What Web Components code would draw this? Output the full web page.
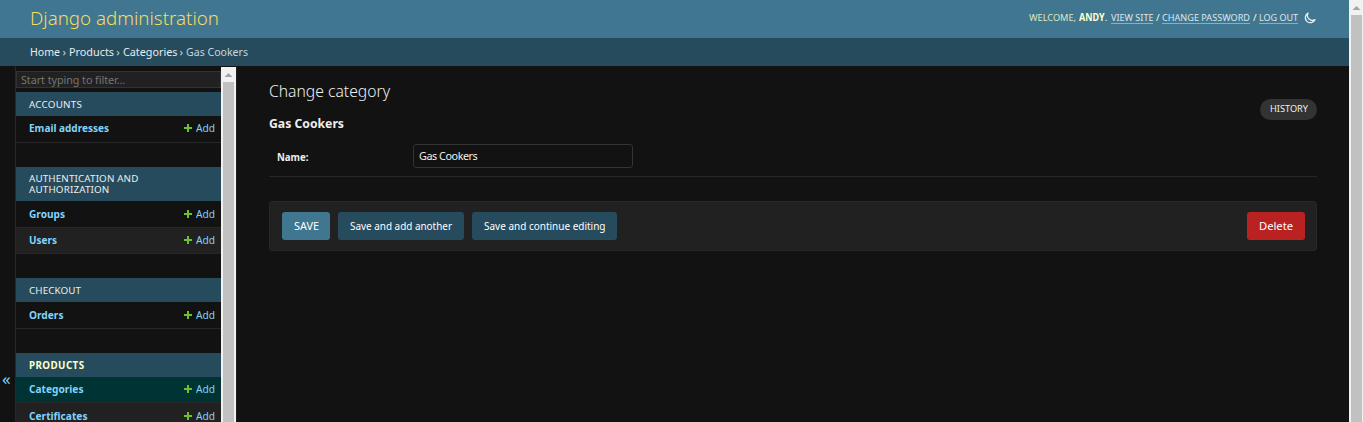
<!DOCTYPE html>
<html lang="en">
<head>
<meta charset="utf-8">
<title>Change category | Django administration</title>
<style>
html,body{margin:0;height:100%;overflow:hidden;background:#121212}
body{font-family:"Noto Sans","Open Sans",sans-serif;font-size:11px;color:#eee}
</style>
</head>
<body>
<admin-app></admin-app>
<script>
const define = (name, html, setup) => customElements.define(name, class extends HTMLElement {
  connectedCallback() {
    if (this.shadowRoot) return;
    this.attachShadow({mode: 'open'}).innerHTML = html;
    if (setup) setup.call(this, this.shadowRoot);
  }
});

/* Text run that fills a given width: condensed when too wide, tracked when too narrow. */
define('fit-text', `<style>
:host{display:inline-block;white-space:nowrap;line-height:16px;flex:none}
span{display:inline-block;transform-origin:0 50%}
</style><span><slot></slot></span>`, function (root) {
  const w = +this.getAttribute('w'), s = root.querySelector('span');
  const natural = s.getBoundingClientRect().width;
  if (natural > w) s.style.transform = `scaleX(${w / natural})`;
  else s.style.letterSpacing = (w - natural) / this.textContent.length + 'px';
  this.style.width = w + 'px';
});

define('scroll-bar', `<style>
:host{display:flex;flex-direction:column;align-items:center;box-sizing:border-box;background:#f1f1f1;flex:none}
svg{display:block;flex:none}
div{flex:1;align-self:stretch;background:#c1c1c1;margin:0 var(--edge,2px) 0 2px}
</style><svg width="15" height="15" viewBox="0 0 15 15"><path d="M3.5 10 7.5 6l4 4z" fill="#a3a3a3"/></svg><div></div>`);

define('admin-header', `<style>
:host{display:flex;justify-content:space-between;height:38px;background:#417690;padding:0 33px 0 30px;box-sizing:border-box;flex:none}
.brand{font:300 19px/36px "Noto Sans","Open Sans",sans-serif;color:#f5dd5d}
.brand fit-text{line-height:36px}
.tools{display:flex;align-items:center;font-size:9.8px;color:#ffc;height:35px}
.link{color:#dfe7eb;border-bottom:1px solid #90adbb;line-height:11px}
b{font-weight:700}
svg{margin:1px 0 0 6px}
.s{margin:0 3px 0 3px;width:3px}
</style>
<div class="brand"><fit-text w="189">Django administration</fit-text></div>
<div class="tools"><fit-text w="47" style="color:#dfe7c0">WELCOME,</fit-text><b style="margin-left:3px"><fit-text w="25.5">ANDY</fit-text></b><span>.</span><fit-text class="link" w="42.5" style="margin-left:3px">VIEW SITE</fit-text><span class="s">/</span><fit-text class="link" w="88">CHANGE PASSWORD</fit-text><span class="s">/</span><fit-text class="link" w="39">LOG OUT</fit-text>
<svg width="12" height="12" viewBox="0 0 12 12" fill="none" stroke="#e7edf0" stroke-width="1.3" stroke-linejoin="round"><path d="M4 1.1A5.1 5.1 0 1 0 11.1 7.6 5 5 0 0 1 4 1.1Z"/></svg></div>`);

define('bread-crumbs', `<style>
:host{display:flex;align-items:center;gap:2.4px;height:28px;background:#264b5d;padding-left:30px;font-size:11.5px;color:#e8edef;flex:none}
i{font-style:normal;width:4px;color:#c9d6db;line-height:16px}
.now{color:#c6d6dd}
</style><fit-text w="30">Home</fit-text><i>›</i><fit-text w="45">Products</fit-text><i>›</i><fit-text w="54.5">Categories</fit-text><i>›</i><fit-text class="now" w="62">Gas Cookers</fit-text>`);

define('nav-module', `<style>
:host{display:block;margin-bottom:24px}
header{background:#264b5d;height:24px;box-sizing:border-box;padding:7px 13px 0;font-size:9.8px;color:#eee;display:flex;flex-direction:column}
:host([tall]) header{height:34px;padding-top:6px}
header ::slotted(fit-text){line-height:11px}
:host([current]) header{font-weight:700;color:#ffc}
</style><header><slot name="title"></slot></header><slot></slot>`);

define('nav-row', `<style>
:host{display:flex;justify-content:space-between;align-items:flex-start;box-sizing:border-box;height:26px;border-bottom:1px solid #272727;padding:4px 6px 0 13px;color:#81d4fa;font-size:11.3px}
:host([first]){height:27px}
:host([low]){padding-top:5px}
:host([alt]){background:#212121}
:host([current]){background:#003333}
b{font-weight:700}
.add{display:flex;align-items:center}
svg{margin-right:4px}
</style><b><slot></slot></b><span class="add"><svg width="8" height="8" viewBox="0 0 8 8"><path d="M3 0h2v3h3v2H5v3H3V5H0V3h3z" fill="#70bf2b"/></svg><fit-text w="19">Add</fit-text></span>`);

define('nav-sidebar', `<style>
:host{display:flex;flex:none;width:237px;box-sizing:border-box;border-right:1px solid #202020;overflow:hidden}
.toggle{border-right:1px solid #272727;box-sizing:border-box;width:16px;color:#81d4fa;font-size:17px;padding:305px 0 0 2px;line-height:16px;flex:none}
.list{width:205px;flex:none;overflow:hidden;padding-top:5px}
input{display:block;box-sizing:border-box;width:205px;height:17px;border:1px solid #333;background:#212121;padding:0 4px;margin-bottom:4px;font:10.8px "Noto Sans",sans-serif;letter-spacing:-.07px}
input::placeholder{color:#757575}
scroll-bar{width:15px;margin-top:1px}
</style>
<div class="toggle">«</div>
<div class="list"><input placeholder="Start typing to filter…">
<nav-module><fit-text slot="title" w="53">ACCOUNTS</fit-text><nav-row first><fit-text w="80">Email addresses</fit-text></nav-row></nav-module>
<nav-module tall><fit-text slot="title" w="109.5">AUTHENTICATION AND</fit-text><fit-text slot="title" w="80.5">AUTHORIZATION</fit-text><nav-row first low><fit-text w="36">Groups</fit-text></nav-row><nav-row alt><fit-text w="28">Users</fit-text></nav-row></nav-module>
<nav-module><fit-text slot="title" w="52">CHECKOUT</fit-text><nav-row first low><fit-text w="34.5">Orders</fit-text></nav-row></nav-module>
<nav-module current><fit-text slot="title" w="55.5">PRODUCTS</fit-text><nav-row current><fit-text w="54.5">Categories</fit-text></nav-row><nav-row alt low><fit-text w="58.5">Certificates</fit-text></nav-row></nav-module>
</div><scroll-bar></scroll-bar>`);

define('action-button', `<style>
:host{display:flex;align-items:center;justify-content:center;height:28px;border-radius:3px;background:#264b5d;color:#fff;font-size:11.4px;flex:none}
</style><slot></slot>`);

define('change-form', `<style>
:host{display:block;flex:1;padding:13px 32px 0 32px}
.top{display:flex;justify-content:space-between;height:42px}
h1{margin:0;font:300 16.5px/24px "Noto Sans","Open Sans",sans-serif;color:#eee}
h1 fit-text{line-height:24px}
.history{margin-top:20px;width:57px;height:21px;border-radius:11px;background:#333;display:flex;align-items:center;justify-content:center;box-sizing:border-box;padding-bottom:1px;font-size:9.3px}
h2{margin:-5px 0 0 0;font-size:12.6px;line-height:16px;font-weight:700;color:#eee;height:28px}
.field{display:flex;align-items:center;height:24px;padding:0 0 8px 8px;border-bottom:1px solid #272727}
.field b{width:136px;padding-top:2px}
input{box-sizing:border-box;width:220px;height:24px;border:1px solid #333;border-radius:3px;background:#121212;color:#eee;padding:0 5px 2px;font:10.8px "Noto Sans",sans-serif;letter-spacing:-.45px}
.row{display:flex;gap:8px;margin-top:24px;padding:10px 11px 10px 12px;border:1px solid #272727;border-radius:3px;background:#212121}
</style>
<div class="top"><h1><fit-text w="121">Change category</fit-text></h1><div class="history"><fit-text w="38">HISTORY</fit-text></div></div>
<h2><fit-text w="75">Gas Cookers</fit-text></h2>
<div class="field"><b><fit-text w="31.5">Name:</fit-text></b><input value="Gas Cookers"></div>
<div class="row"><action-button style="width:48px;background:#417690"><fit-text w="25">SAVE</fit-text></action-button><action-button style="width:126px"><fit-text w="102">Save and add another</fit-text></action-button><action-button style="width:145px"><fit-text w="121.5">Save and continue editing</fit-text></action-button><action-button style="width:58px;background:#ba2121;margin-left:auto"><fit-text w="34">Delete</fit-text></action-button></div>`);

define('admin-app', `<style>
:host{display:flex;height:422px;overflow:hidden}
.page{flex:1;min-width:0;display:flex;flex-direction:column}
.main{display:flex;flex:1;min-height:0}
scroll-bar{width:14px;--edge:1px}
</style><div class="page"><admin-header></admin-header><bread-crumbs></bread-crumbs><div class="main"><nav-sidebar></nav-sidebar><change-form></change-form></div></div><scroll-bar></scroll-bar>`);
</script>
</body>
</html>
